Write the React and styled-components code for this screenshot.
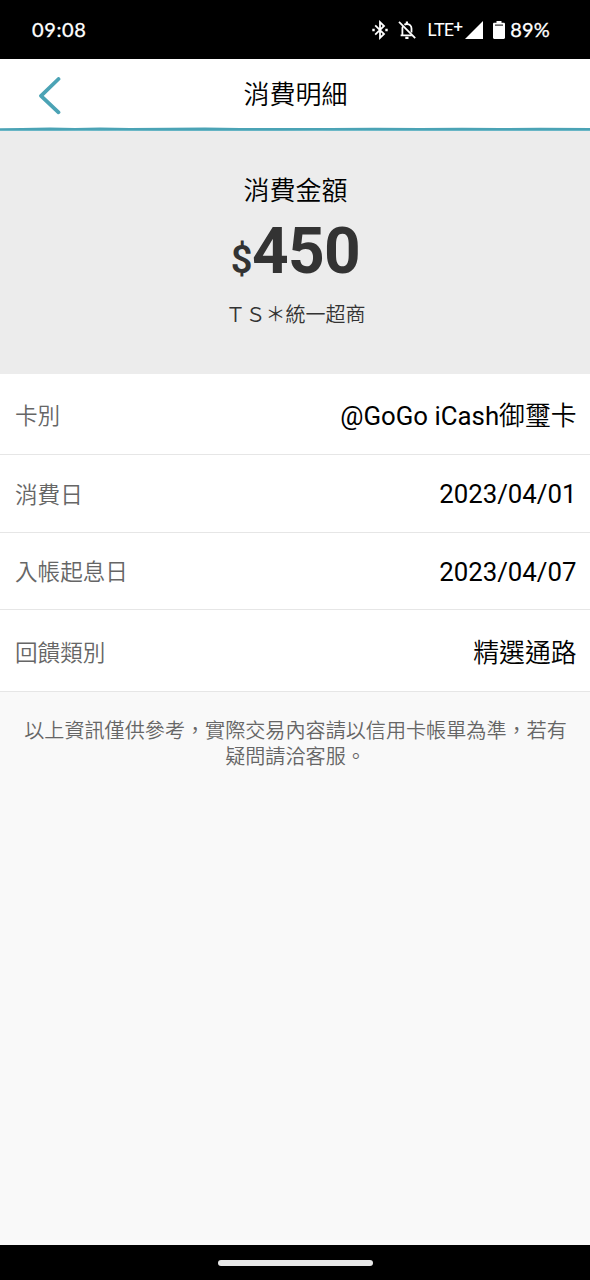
import React from "react";
import styled, { createGlobalStyle } from "styled-components";

const details = [
  { label: "卡別", latin: "@GoGo iCash", text: "御璽卡", height: 81, offset: 3 },
  { label: "消費日", latin: "2023/04/01", height: 78, offset: 1 },
  { label: "入帳起息日", latin: "2023/04/07", height: 77, offset: 1 },
  { label: "回饋類別", text: "精選通路", height: 82, offset: 4 },
];

const BluetoothIcon = () => (
  <svg width="16" height="20" viewBox="0 0 16 20" fill="none" stroke="#fff" strokeWidth="1.8">
    <path d="M3.2 5.4 12 14l-4 3.8V2.2L12 6l-8.8 8.6" />
    <path d="M.3 10h2.4M13.3 10h2.4" strokeWidth="2.4" />
  </svg>
);

const BellOffIcon = () => (
  <svg width="18" height="20" viewBox="0 0 18 20" fill="none" stroke="#fff" strokeWidth="1.8">
    <path d="M1 1.8 17.2 18.2" />
    <path d="M2.6 15.4h11.2M4.4 15.4V8.6c0-.9.2-1.6.5-2.2M6.4 4.7C7 4.2 7.9 4 8.9 4c2.8 0 4.6 2 4.6 4.6v3.8" />
    <path d="M8.9 1.5v2M7.3 17.9h3.2" strokeWidth="2.2" />
  </svg>
);

const SignalIcon = () => (
  <svg width="18" height="18" viewBox="0 0 18 18">
    <path d="M18 0v18H0z" fill="#fff" />
  </svg>
);

const BatteryIcon = () => (
  <svg width="12" height="18" viewBox="0 0 12 18">
    <path d="M3.5 0h5v1.8h2.2c.7 0 1.3.5 1.3 1.2v13.8c0 .7-.6 1.2-1.3 1.2H1.3C.6 18 0 17.5 0 16.8V3c0-.7.6-1.2 1.3-1.2h2.2z" fill="#fff" />
    <path d="M2 4.1h8" stroke="#000" strokeWidth="1" />
  </svg>
);

const BackIcon = () => (
  <svg width="24" height="38" viewBox="0 0 24 38" fill="none">
    <path d="M20.5 2 3 18.8 20.5 35.3" stroke="#4ba3b5" strokeWidth="3.8" strokeLinecap="round" strokeLinejoin="round" />
  </svg>
);

// hand drawn looking line under the header
const BrushLine = () => (
  <BrushSvg width="590" height="4" viewBox="0 0 590 4">
    <path
      d="M0 1.2 22 1 50 .6 75 .9 100 .6 130 .9 170 .8 205 .6 240 1 290 .9 330 1.1 375 .7 420 .9 462 .7 500 1 540 .7 590 1V4H0z"
      fill="#4ba3b5"
    />
    <path d="M0 3.7h60l40-.3 60 .4h120l50-.4 90 .3h170" stroke="#8ccbd6" strokeWidth=".6" fill="none" />
  </BrushSvg>
);

const App = () => {
  return (
    <>
      <GlobalStyle />
      <Screen>
        <StatusBar>
          <Clock>09:08</Clock>
          <StatusIcons>
            <BluetoothIcon />
            <BellOffIcon />
            <Network>
              LTE<sup>+</sup>
            </Network>
            <SignalIcon />
            <BatteryIcon />
            <Percent>89%</Percent>
          </StatusIcons>
        </StatusBar>

        <Header>
          <HeaderContent>
            <BackButton aria-label="返回">
              <BackIcon />
            </BackButton>
            <Title>消費明細</Title>
          </HeaderContent>
          <BrushLine />
        </Header>

        <Summary>
          <SummaryLabel>消費金額</SummaryLabel>
          <Amount>
            <Currency>$</Currency>450
          </Amount>
          <Merchant>ＴＳ＊統一超商</Merchant>
        </Summary>

        <DetailList>
          {details.map((item) => (
            <DetailRow key={item.label} $height={item.height} $offset={item.offset}>
              <Label>{item.label}</Label>
              <Value>
                {item.latin}
                {item.text && <ValueText>{item.text}</ValueText>}
              </Value>
            </DetailRow>
          ))}
        </DetailList>

        <Notice>以上資訊僅供參考，實際交易內容請以信用卡帳單為準，若有疑問請洽客服。</Notice>

        <NavigationBar>
          <HomeHandle />
        </NavigationBar>
      </Screen>
    </>
  );
};

export default App;

const GlobalStyle = createGlobalStyle`
  * {
    box-sizing: border-box;
  }

  body {
    margin: 0;
    background: #f9f9f9;
    font-family: Roboto, "Noto Sans CJK TC", sans-serif;
  }
`;

const Screen = styled.div`
  display: flex;
  flex-direction: column;
  width: 590px;
  height: 1280px;
  background: #f9f9f9;
  overflow: hidden;
`;

const StatusBar = styled.div`
  display: flex;
  justify-content: space-between;
  align-items: center;
  flex: none;
  height: 59px;
  padding: 0 40px 0 32px;
  background: #000;
  color: #fff;
  font-family: Lato, sans-serif;
  font-size: 20px;
`;

const Clock = styled.span`
  padding-bottom: 2px;
  letter-spacing: 0.6px;
  -webkit-text-stroke: 0.3px #fff;
`;

const StatusIcons = styled.div`
  display: flex;
  align-items: center;

  svg {
    flex: none;
  }

  svg + svg {
    margin-left: 10px;
  }
`;

const Network = styled.span`
  width: 37px;
  margin: 0 1px 0 11px;
  padding-bottom: 1px;
  font-size: 18px;
  line-height: 20px;
  letter-spacing: -0.8px;
  white-space: nowrap;

  sup {
    font-size: 17px;
    font-weight: 700;
    line-height: 0;
    vertical-align: 4px;
  }
`;

const Percent = styled.span`
  margin-left: 5px;
  padding-bottom: 2px;
  letter-spacing: 0.2px;
  -webkit-text-stroke: 0.3px #fff;
`;

const Header = styled.header`
  display: flex;
  flex-direction: column;
  flex: none;
  height: 72px;
  background: #fff;
`;

const HeaderContent = styled.div`
  display: grid;
  grid-template-columns: 100px 1fr 100px;
  align-items: center;
  flex: 1;
`;

const BrushSvg = styled.svg`
  display: block;
  flex: none;
`;

const BackButton = styled.button`
  display: flex;
  justify-content: center;
  padding: 5px 0 0;
  border: 0;
  background: none;
`;

const Title = styled.h1`
  margin: 0;
  padding: 3px 0 0 1px;
  font-size: 26px;
  font-weight: 350;
  line-height: 38px;
  text-align: center;
`;

const Summary = styled.section`
  display: flex;
  flex-direction: column;
  align-items: center;
  flex: none;
  height: 243px;
  padding: 41px 0 0 1px;
  background: #ececec;
`;

const SummaryLabel = styled.div`
  font-size: 26px;
  font-weight: 350;
  line-height: 38px;
`;

const Amount = styled.div`
  margin-top: 4px;
  color: #333;
  font-size: 64px;
  font-weight: 700;
  line-height: 75px;
  letter-spacing: -0.6px;
`;

const Currency = styled.span`
  font-size: 38px;
  font-weight: 600;
`;

const Merchant = styled.div`
  margin-top: 2px;
  color: #333;
  font-size: 20px;
  font-weight: 350;
  line-height: 30px;
`;

const DetailList = styled.div`
  flex: none;
  background: #fff;
`;

const DetailRow = styled.div`
  display: flex;
  justify-content: space-between;
  align-items: center;
  height: ${(props) => props.$height}px;
  padding: ${(props) => props.$offset}px 13.5px 0 15px;
  border-bottom: 1px solid #e6e6e6;
`;

const Label = styled.span`
  padding-top: 3px;
  color: #666;
  font-size: 22.6px;
  font-weight: 350;
  line-height: 34px;
`;

const Value = styled.span`
  color: #000;
  font-size: 25.8px;
  line-height: 38px;
`;

const ValueText = styled.span`
  font-weight: 350;
`;

const Notice = styled.p`
  flex: 1;
  margin: 0;
  padding: 26px 23px 0 24px;
  color: #666;
  font-size: 20.1px;
  font-weight: 350;
  line-height: 26px;
  text-align: center;
`;

const NavigationBar = styled.div`
  display: flex;
  justify-content: center;
  align-items: center;
  flex: none;
  height: 35px;
  background: #000;
`;

const HomeHandle = styled.div`
  width: 155px;
  height: 6px;
  border-radius: 3px;
  background: #e8e8e8;
`;
